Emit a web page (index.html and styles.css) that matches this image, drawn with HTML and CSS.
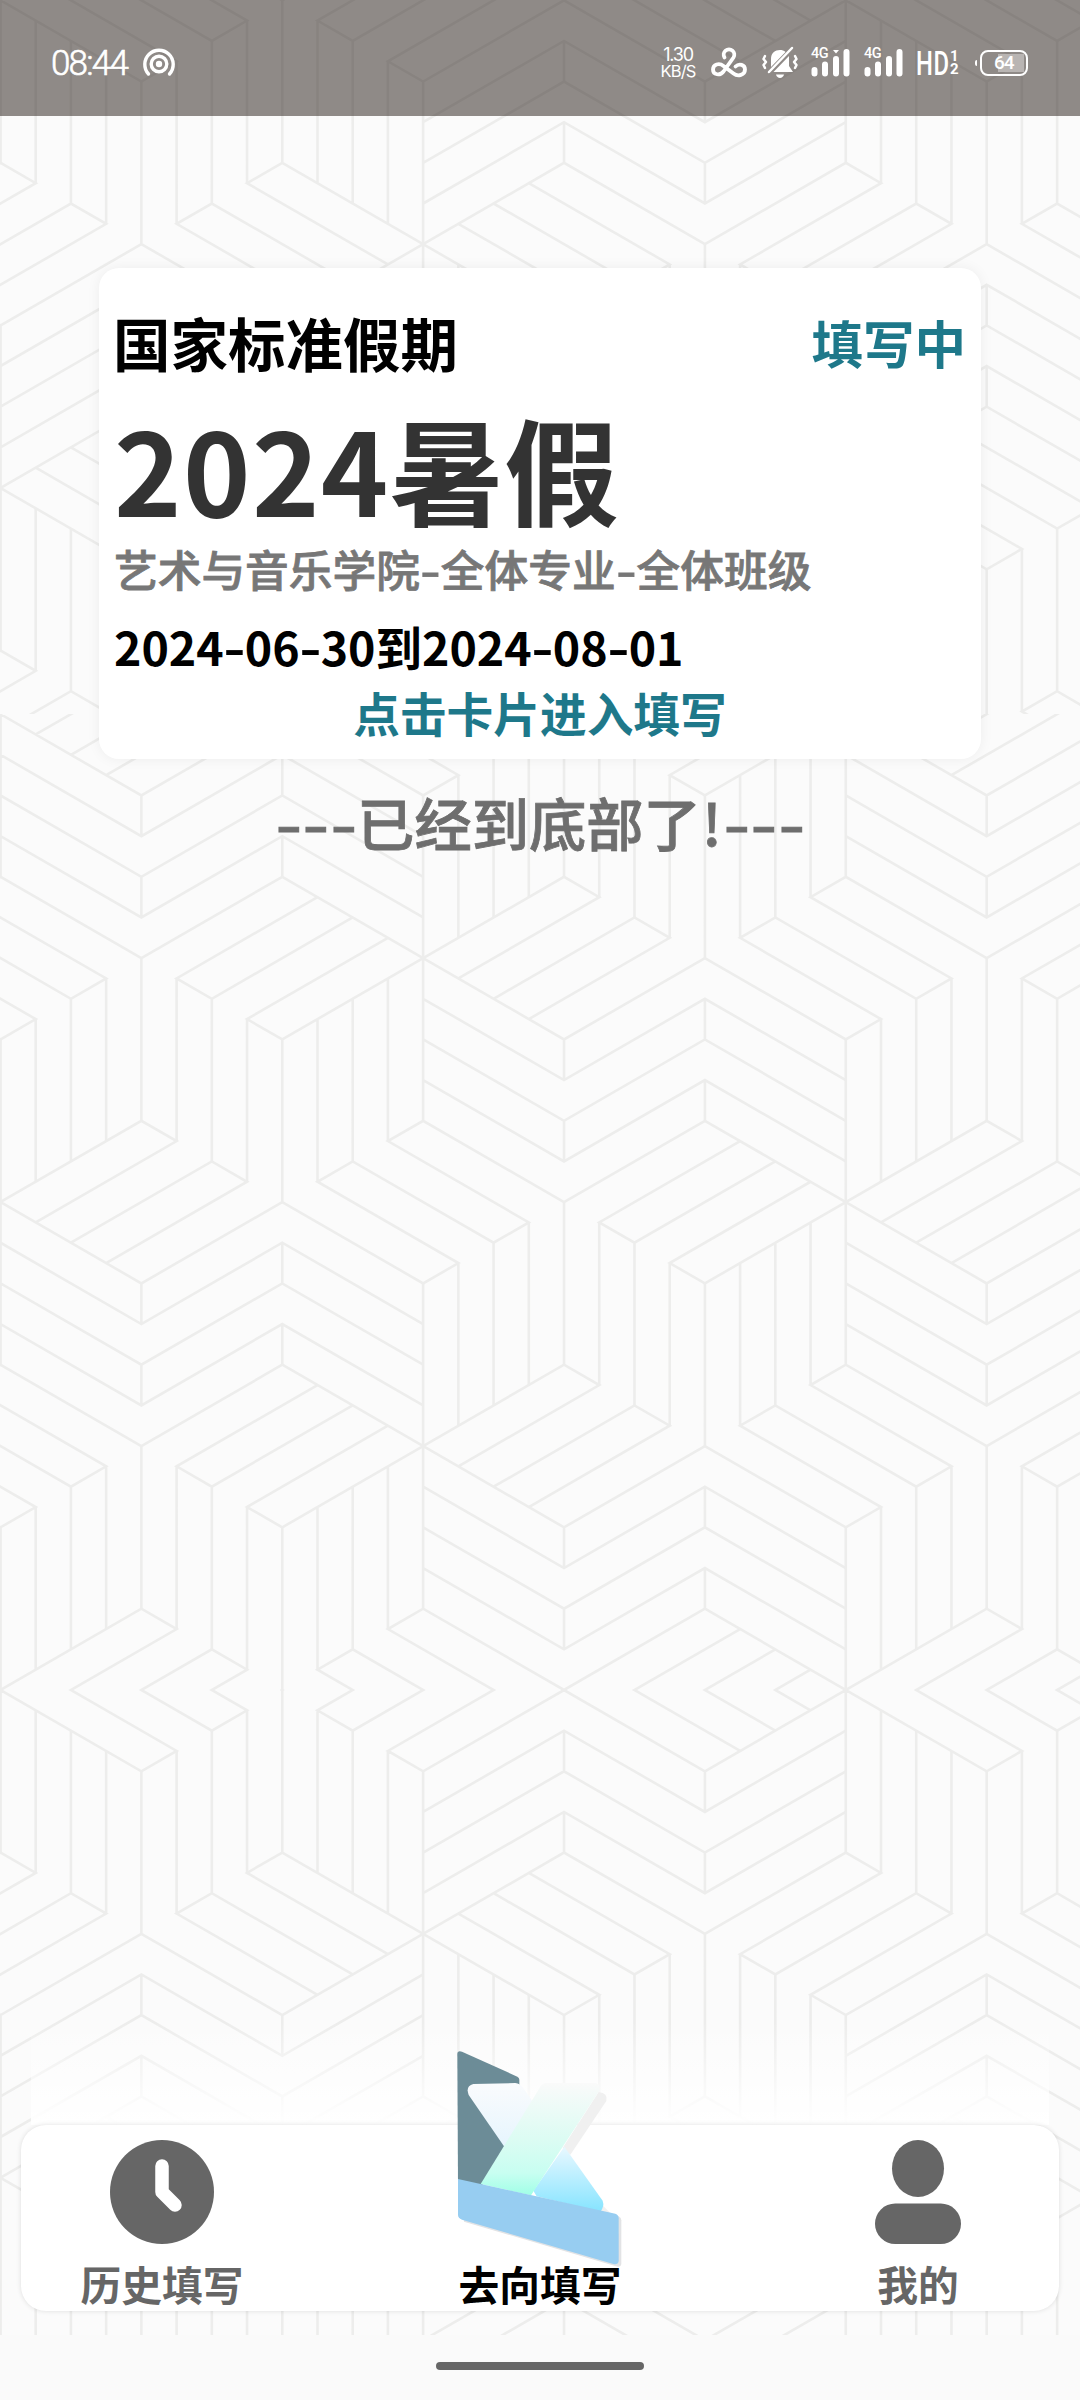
FILE: index.html
```html
<!DOCTYPE html>
<html lang="zh-CN">
<head>
<meta charset="utf-8">
<title>去向填写</title>
<link rel="stylesheet" href="styles.css">
</head>
<body>
<div class="screen">
  <svg class="wallpaper" width="1080" height="2335" viewBox="0 0 1080 2335" aria-hidden="true">
    <defs>
      <path id="motif" vector-effect="non-scaling-stroke" d="M0-8V8M-1 1V9M-2 2V10M-3 3V11M-4 4V12M4 12V20M3 13V21M2 14V22M1 15V23M5 13V21M6 14V22M7 15V23M4 4V6M4 8V10M8 2V4M8 6V8M-4-4L4 4L8 0M-4 4L4-4L5-3L1 1M2 2L6-2L7-1L3 3M9 9L5 13L6 14L10 10M11 11L7 15L8 16M4 12L8 8M4 12L0 8L-1 9L3 13L2 14L-2 10L-3 11L1 15L0 16L-4 12M0 2L4 6L8 2L12 6M0 4L4 8L8 4L12 8M0 6L4 10L8 6L12 10"/>
      <g id="pair"><use href="#motif"/><use href="#motif" x="12" y="12"/></g>
      <g id="row"><use href="#pair" x="-24"/><use href="#pair"/><use href="#pair" x="24"/></g>
      <g id="field"><use href="#row" y="-72"/><use href="#row" y="-48"/><use href="#row" y="-24"/><use href="#row"/></g>
      <clipPath id="top"><rect width="1080" height="714"/></clipPath>
      <clipPath id="middle"><rect y="714" width="1080" height="976"/></clipPath>
      <clipPath id="bottom"><rect y="1690" width="1080" height="645"/></clipPath>
    </defs>
    <g class="wallpaper-lines">
      <g clip-path="url(#top)"><use href="#field" transform="translate(.5 .3) scale(35.22 -20.32)"/></g>
      <g clip-path="url(#middle)"><use href="#field" transform="translate(.5 1690) scale(35.22 20.33)"/></g>
      <g clip-path="url(#bottom)"><use href="#field" transform="translate(.5 1690) scale(35.22 -20.32)"/></g>
    </g>
  </svg>

  <header class="status">
    <span class="clock">08:44</span>
    <svg class="cast" width="34" height="32" viewBox="0 0 34 32"><g fill="none" stroke="#fff"><path d="M6.5 27A14.2 14.2 0 1 1 27.5 27" stroke-width="3.4" stroke-linecap="round"/><circle cx="17" cy="17" r="7.8" stroke-width="3.4"/></g><circle cx="17" cy="17" r="3.2" fill="#fff"/></svg>
    <div class="indicators">
      <div class="speed"><span>1.30</span><span>KB/S</span></div>
      <svg class="fan" width="36" height="32" viewBox="0 0 36 32"><path d="M13.500 10.500A5.300 5.300 0 1 1 22.500 10.500L12.500 24.500C9 29 2 28 2 22.500C2 17.500 8 15.500 12.500 19L22.500 26.500C27 30 34 28 34 22.500C34 17.500 28 16 24.500 19.500" fill="none" stroke="#fff" stroke-width="3.800" stroke-linecap="round" stroke-linejoin="round"/></svg>
      <svg class="bell" width="36" height="34" viewBox="0 0 36 34"><g fill="#fff"><path d="M9 22V13C9 7 13 4 18 4C20 4 22 4.500 23.500 6L9 21Z"/><path d="M27 10V20L31 26H11.500Z"/><path d="M14 28.500H22C21 33 15 33 14 28.500Z"/></g><g fill="none" stroke="#fff" stroke-width="2.500" stroke-linecap="round" stroke-linejoin="round"><path d="M7 26L30 2"/><path d="M3 10L1.500 13L4 16L1.500 19L3 22M33 10L34.500 13L32 16L34.500 19L33 22"/></g></svg>
      <div class="signal"><span>4G</span><svg width="40" height="30" viewBox="0 0 40 30"><path d="M3.500 22V25.500M14 16.500V25.500M25 11V25.500M35.500 4V25.500" stroke="#fff" stroke-width="6" stroke-linecap="round"/><path d="M22 2H28L25 5.500Z" fill="#fff"/></svg></div>
      <div class="signal"><span>4G</span><svg width="40" height="30" viewBox="0 0 40 30"><path d="M3.500 22V25.500M14 16.500V25.500M25 11V25.500M35.500 4V25.500" stroke="#fff" stroke-width="6" stroke-linecap="round"/></svg></div>
      <div class="hd"><span class="hd-label">HD</span><div class="sim"><span>1</span><span>2</span></div></div>
      <div class="battery"><span>64</span></div>
    </div>
  </header>

  <main class="content">
    <section class="card">
      <div class="card-head"><h2>国家标准假期</h2><span class="state">填写中</span></div>
      <h1><span class="digits">2024</span>暑假</h1>
      <p class="scope">艺术与音乐学院<i>-</i>全体专业<i>-</i>全体班级</p>
      <p class="dates">2024<i>-</i>06<i>-</i>30到2024<i>-</i>08<i>-</i>01</p>
      <p class="enter">点击卡片进入填写</p>
    </section>
    <p class="end"><i>-</i><i>-</i><i>-</i>已经到底部了<b>!</b><i>-</i><i>-</i><i>-</i></p>
  </main>

  <footer class="dock">
    <div class="fade"></div>
    <nav class="tabs">
      <a class="tab history">
        <svg width="104" height="104" viewBox="0 0 104 104"><circle cx="52" cy="52" r="52" fill="#666"/><path d="M52 26V52L65 65" fill="none" stroke="#fff" stroke-width="13.500" stroke-linecap="round" stroke-linejoin="round"/></svg>
        <span>历史填写</span>
      </a>
      <a class="tab active">
        <svg class="logo" width="168" height="220" viewBox="170 150 504 660">
          <defs>
            <linearGradient id="ice" x1="0" y1="0" x2="0" y2="1"><stop stop-color="#fafbfd"/><stop offset="1" stop-color="#e6f5fe"/></linearGradient>
            <linearGradient id="mint" x1="0" y1="0" x2="0" y2="1"><stop stop-color="#fafafa"/><stop offset=".5" stop-color="#dcfcf3"/><stop offset=".8" stop-color="#c8fef1"/><stop offset="1" stop-color="#a0ffe6"/></linearGradient>
            <linearGradient id="aqua" x1="0" y1="0" x2="0" y2="1"><stop stop-color="#e9f8ff"/><stop offset="1" stop-color="#86e4ff"/></linearGradient>
          </defs>
          <path d="M174 165Q174 154 188 158L354 233Q360 236 360 242V257L320 450L244 565L176 550Z" fill="#6c8c97"/>
          <path d="M598 279Q627 282 621 306L513 467L490 447ZM600 610L636 645L600 650Z" fill="#f0f0f0"/>
          <path d="M222 255L348 252Q362 253 372 267L398 305L400 420L314 442L208 288Q198 261 222 255Z" fill="url(#ice)"/>
          <path d="M495 443L610 605Q616 622 603 638L412 592L402 575Z" fill="url(#aqua)"/>
          <path d="M244 555L423 263Q430 252 442 252H586Q606 254 599 277L395 589Z" fill="url(#mint)"/>
          <path d="M184 548L658 652Q666 656 666 664V795Q664 806 650 802L194 668Z" fill="#e2e3e5"/>
          <path d="M176 540L648 644Q658 647 658 658V786Q656 798 642 795L188 662Q176 658 176 648Z" fill="#97cdf1"/>
        </svg>
        <span>去向填写</span>
      </a>
      <a class="tab mine">
        <svg width="86" height="104" viewBox="0 0 86 104" fill="#666"><ellipse cx="43" cy="28.500" rx="26" ry="28.500"/><rect y="63.500" width="86" height="40.500" rx="20.250"/></svg>
        <span>我的</span>
      </a>
    </nav>
  </footer>
  <div class="gesture"><span></span></div>
</div>
</body>
</html>
```
FILE: styles.css
```css
* { box-sizing: border-box; margin: 0; padding: 0; }
body { background: #fafafa; font-family: "Noto Sans CJK SC", sans-serif; }
i { font-style: normal; font-weight: 500; display: inline-block; text-align: center; transform: scaleX(1.3); }
svg { display: block; }

.screen { position: relative; width: 1080px; height: 2400px; overflow: hidden; display: flex; flex-direction: column; }
.wallpaper { position: absolute; top: 0; left: 0; z-index: -1; background: #fbfbfb; }
.wallpaper-lines { fill: none; stroke: #ededec; stroke-width: 2.6; }

.status { height: 116px; flex: none; display: flex; align-items: center; padding: 10px 52px 0 51px; background: rgba(35, 25, 19, .5); color: #fff; font-family: Roboto, sans-serif; }
.clock { width: 76px; font-size: 35px; font-weight: 300; letter-spacing: -1.8px; white-space: nowrap; -webkit-text-stroke: .6px #fff; }
.cast { margin-left: 15px; }
.indicators { margin-left: auto; display: flex; align-items: center; }
.speed { width: 36px; display: flex; flex-direction: column; align-items: center; font-size: 18px; line-height: 16px; letter-spacing: -1.2px; font-family: Inter, sans-serif; }
.speed span:last-child { font-size: 16.5px; letter-spacing: -.8px; }
.fan { margin-left: 15px; }
.bell { margin-left: 15px; }
.signal { position: relative; margin-left: 13px; width: 40px; }
.signal span { position: absolute; left: 0; top: 0; font-size: 14.5px; line-height: 11px; letter-spacing: -.6px; font-weight: 500; }
.hd { margin-left: 12px; width: 44px; display: flex; align-items: center; }
.hd-label { flex: none; width: 34px; font: 500 34px/30px Roboto, sans-serif; letter-spacing: 1px; transform: scaleX(.7); transform-origin: left; }
.sim { width: 9px; display: flex; flex-direction: column; font: 700 15px/13px Roboto, sans-serif; }
.battery { position: relative; margin-left: 20px; width: 48px; height: 26px; border: 2.5px solid #fff; border-radius: 8px; padding-left: 12px; font-size: 19px; line-height: 21px; letter-spacing: -1px; font-weight: 500; background: linear-gradient(#b9b5b3, #b9b5b3) 16px 50% / 26px 18px no-repeat; }
.battery::before { content: ""; position: absolute; left: -7px; top: 8px; width: 2px; height: 6px; border-radius: 2px 0 0 2px; background: #fff; }

.content { flex: 1; padding: 152px 99px 0; }
.card { height: 491px; padding: 34px 15px 0; border-radius: 20px; background: #fff; box-shadow: 0 0 14px rgba(0, 0, 0, .06); }
.card-head { height: 80px; display: flex; align-items: center; justify-content: space-between; }
h2 { margin-left: -1px; font-size: 57.5px; line-height: 80px; font-weight: 700; }
.state { font-size: 51.5px; line-height: 80px; font-weight: 700; color: #1e788a; }
h1 { margin-top: 20px; font-size: 114.5px; line-height: 130px; font-weight: 700; color: #333; white-space: nowrap; }
.digits { letter-spacing: 1.4px; }
.scope { margin-top: 6px; font-size: 43.7px; line-height: 60px; font-weight: 500; color: #777; white-space: nowrap; -webkit-text-stroke: .8px #777; }
.scope i { width: 21px; }
.dates { margin-top: 18px; font-size: 46.5px; line-height: 60px; font-weight: 700; white-space: nowrap; }
.dates i { width: 21px; font-weight: 700; }
.enter { margin-top: 6px; font-size: 46.7px; line-height: 60px; font-weight: 700; color: #1e788a; text-align: center; }
.end { margin-top: 23px; font-size: 57.3px; line-height: 80px; font-weight: 500; color: #6e6e6e; text-align: center; white-space: nowrap; -webkit-text-stroke: .8px #6e6e6e; }
.end i { width: 27.5px; }
.end b { display: inline-block; width: 22px; font-weight: 500; }

.dock { flex: none; padding: 0 21px 24px; }
.fade { height: 104px; margin: 0 10px; background: linear-gradient(rgba(255, 255, 255, 0), #fff); }
.tabs { height: 186px; display: flex; justify-content: space-between; border-radius: 25px; background: #fff; box-shadow: 0 0 5px rgba(0, 0, 0, .12); padding: 0 59px; }
.tab { width: 164px; height: 187px; display: flex; flex-direction: column; align-items: center; justify-content: flex-end; color: #666; font-size: 40.7px; line-height: 56px; font-weight: 700; }
.tab span { white-space: nowrap; }
.history svg, .mine svg { margin-bottom: 12px; }
.active { color: #000; }
.logo { margin-bottom: -13px; flex: none; }
.gesture { height: 65px; flex: none; background: #fafafa; display: flex; justify-content: center; padding-top: 27px; }
.gesture span { width: 208px; height: 8px; border-radius: 4px; background: #666; }
```
